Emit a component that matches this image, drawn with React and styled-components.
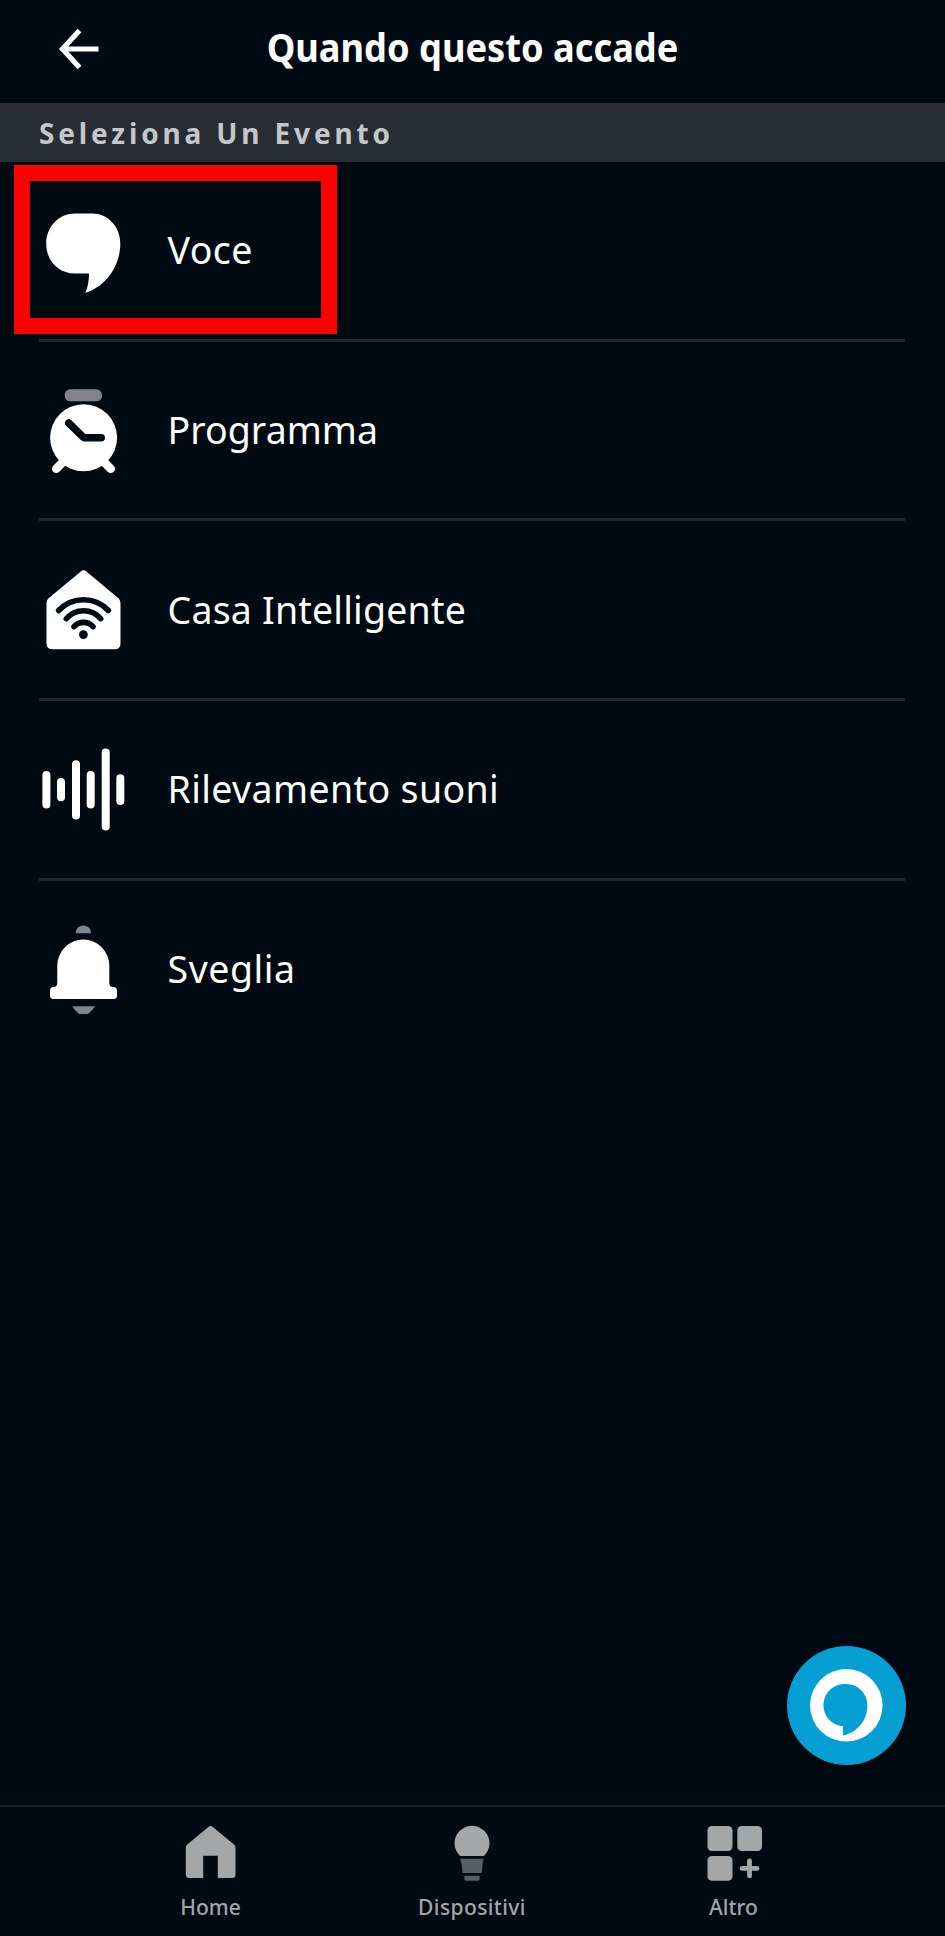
import React from 'react';
import styled, { createGlobalStyle } from 'styled-components';

const GlobalStyle = createGlobalStyle`
    * {
        box-sizing: border-box;
    }

    body {
        margin: 0;
        background: #000a12;
        font-family: "Noto Sans", "Open Sans", sans-serif;
    }
`;

const VoiceIcon = () => (
    <RowIcon viewBox="0 0 92 92">
        <path d="M37 7.5H54C70 7.5 82.3 20.5 82.3 37.5C82.3 60 68 80.5 47.3 86.9C50 80.5 51 74.5 51 67.5H37C20 67.5 8.2 54.5 8.2 37.5C8.2 20.5 21 7.5 37 7.5Z" fill="#fff" />
    </RowIcon>
);

const ClockIcon = () => (
    <RowIcon viewBox="0 0 92 92">
        <rect x="26.7" y="3.3" width="37.3" height="12" rx="5.5" fill="#7f858a" />
        <path d="M26 75L18.3 82.7M65 75L72.7 82.7" stroke="#fff" strokeWidth="8.6" strokeLinecap="round" />
        <circle cx="45.6" cy="51.7" r="33.5" fill="#fff" />
        <path d="M30.7 37L45.7 51.7H63.3" fill="none" stroke="#000a12" strokeWidth="7.4" strokeLinecap="round" strokeLinejoin="round" />
    </RowIcon>
);

const SmartHomeIcon = () => (
    <RowIcon viewBox="0 0 92 92">
        <path d="M42.8 6.4Q45.6 4.2 48.4 6.4L80.4 33.2Q82.5 35 82.5 38V78.3Q82.5 84.3 76.5 84.3H14.5Q8.5 84.3 8.5 78.3V38Q8.5 35 10.6 33.2Z" fill="#fff" />
        <g fill="none" stroke="#000a12" strokeWidth="5.6" strokeLinecap="round">
            <path d="M20.7 45.5A34 34 0 0 1 70.3 45.5" />
            <path d="M28.3 53.7A22.5 22.5 0 0 1 62.7 53.7" />
            <path d="M36 61.6A12.8 12.8 0 0 1 55 61.6" />
        </g>
        <circle cx="45.4" cy="69.6" r="4.4" fill="#000a12" />
    </RowIcon>
);

const SoundIcon = () => (
    <RowIcon viewBox="0 0 92 92">
        <path d="M8.4 29.9V59.5M23 36.9V52.2M38 19.2V70.5M52.7 29.9V59.5M67.7 7.5V81.5M82.3 33.2V55.9" stroke="#fff" strokeWidth="8" strokeLinecap="round" />
    </RowIcon>
);

const BellIcon = () => (
    <RowIcon viewBox="0 0 92 92">
        <path d="M37.7 8.2V6.9A7.7 7.2 0 0 1 53 6.9V8.2Z" fill="#7f858a" />
        <path d="M19.3 40.6A26 26 0 0 1 71.3 40.6V57.7Q71.3 61.9 75 61.9Q79 61.9 79 65.7V70.4Q79 73.9 75.5 73.9H15.6Q12 73.9 12 70.4V65.7Q12 61.9 15.6 61.9Q19.3 61.9 19.3 57.7Z" fill="#fff" />
        <path d="M34.3 81.2H57Q54.5 85.7 50 88.9H41Q36.8 85.7 34.3 81.2Z" fill="#7f858a" />
    </RowIcon>
);

const HomeIcon = () => (
    <TabIcon viewBox="0 0 56 56">
        <path d="M25.4 2Q27.6 0 29.8 2L51 19.6Q52.5 21 52.5 23V49.5Q52.5 53 49 53H34.8V30.7H20.2V53H6.3Q2.8 53 2.8 49.5V23Q2.8 21 4.3 19.6Z" fill="#a4a7a9" />
    </TabIcon>
);

const BulbIcon = () => (
    <TabIcon viewBox="0 0 56 56">
        <path d="M16 31A17.5 17.5 0 1 1 40 31Z" fill="#a4a7a9" />
        <path d="M16 33.7H39.7C38.5 38 38.2 42 37.7 48H18.7C18.2 42 17.5 38 16 33.7Z" fill="#595d65" />
        <path d="M20.3 50.7H35.7L35.2 55.7H20.8Z" fill="#595d65" />
    </TabIcon>
);

const MoreIcon = () => (
    <TabIcon viewBox="0 0 56 56">
        <g fill="#a4a7a9">
            <rect x="1.5" y="1" width="25" height="25" rx="4.5" />
            <rect x="31.3" y="1" width="24.7" height="25" rx="4.5" />
            <rect x="1.5" y="31" width="25" height="24.8" rx="4.5" />
        </g>
        <path d="M36 43.4H51M43.5 35.9V50.9" stroke="#a4a7a9" strokeWidth="4.8" strokeLinecap="round" />
    </TabIcon>
);

const events = [
    { label: 'Voce', Icon: VoiceIcon, spacing: 0.4, selected: true },
    { label: 'Programma', Icon: ClockIcon, spacing: 0.05 },
    { label: 'Casa Intelligente', Icon: SmartHomeIcon, spacing: 0.2 },
    { label: 'Rilevamento suoni', Icon: SoundIcon, spacing: 0.38 },
    { label: 'Sveglia', Icon: BellIcon, spacing: 0.55 },
];

const tabs = [
    { label: 'Home', Icon: HomeIcon, spacing: 0 },
    { label: 'Dispositivi', Icon: BulbIcon, spacing: 0.4 },
    { label: 'Altro', Icon: MoreIcon, spacing: 0 },
];

export default function App() {
    return (
        <Screen>
            <GlobalStyle />
            <Header>
                <BackButton aria-label="Indietro">
                    <svg width="44" height="44" viewBox="0 0 44 44">
                        <path d="M22.5 3.5L5.5 22L22.5 40.5M5 22H41.5" fill="none" stroke="#fff" strokeWidth="5.2" />
                    </svg>
                </BackButton>
                <Title>Quando questo accade</Title>
            </Header>
            <SectionTitle>Seleziona Un Evento</SectionTitle>
            <EventList>
                {events.map(({ label, Icon, spacing, selected }) => (
                    <EventRow key={label}>
                        {selected && <Highlight />}
                        <Icon />
                        <EventLabel $spacing={spacing}>{label}</EventLabel>
                    </EventRow>
                ))}
            </EventList>
            <TabBar>
                <AlexaButton aria-label="Alexa">
                    <svg width="119" height="119" viewBox="0 0 119 119">
                        <circle cx="59.3" cy="59.3" r="36.3" fill="#fff" />
                        <path d="M59.2 38A21.2 21.2 0 0 1 80.4 59.2C80.4 74 71 86 56 89.5V80.3A21.2 21.2 0 0 1 59.2 38Z" fill="#059fd3" />
                    </svg>
                </AlexaButton>
                {tabs.map(({ label, Icon, spacing }) => (
                    <Tab key={label}>
                        <Icon />
                        <TabLabel $spacing={spacing}>{label}</TabLabel>
                    </Tab>
                ))}
            </TabBar>
        </Screen>
    );
}

const Screen = styled.div`
    display: flex;
    flex-direction: column;
    width: 945px;
    height: 1936px;
    background: #000a12;
    color: #fff;
    overflow: hidden;
`;

const Header = styled.header`
    display: grid;
    grid-template-columns: 157px 1fr 157px;
    align-items: center;
    height: 103px;
    padding-bottom: 5px;
`;

const BackButton = styled.button`
    display: flex;
    padding: 0 0 0 57px;
    border: 0;
    background: none;
`;

const Title = styled.h1`
    margin: 0 0 4px;
    font-size: 39.5px;
    font-weight: 700;
    line-height: 54px;
    text-align: center;
    white-space: nowrap;
    transform: scaleX(0.917);
`;

const SectionTitle = styled.h2`
    height: 59px;
    margin: 0;
    padding-left: 39px;
    background: #282c33;
    color: #c4c7c9;
    font-size: 28px;
    font-weight: 700;
    line-height: 61px;
    letter-spacing: 3.85px;
`;

const EventList = styled.ul`
    flex: 1;
    margin: 0;
    padding: 0 40px 0 39px;
    list-style: none;
`;

const EventRow = styled.li`
    position: relative;
    display: flex;
    align-items: center;
    height: 179.7px;
    border-bottom: 3px solid #22272f;

    &:last-child {
        border-bottom-color: transparent;
    }
`;

/* red frame drawn over the selected row */
const Highlight = styled.div`
    position: absolute;
    top: 3px;
    left: -25px;
    width: 323px;
    height: 169px;
    border: 16px solid #fe0000;
`;

const RowIcon = styled.svg`
    flex: none;
    width: 92px;
    height: 92px;
    margin: 3px 0 0 -1px;
`;

const EventLabel = styled.span`
    margin-left: 37.5px;
    font-size: 37.5px;
    line-height: 52px;
    letter-spacing: ${({ $spacing }) => $spacing}px;
    white-space: nowrap;
`;

const TabBar = styled.nav`
    position: relative;
    display: flex;
    justify-content: center;
    height: 131px;
    padding-right: 1px;
    border-top: 2px solid #1a2129;
`;

const Tab = styled.div`
    display: flex;
    flex-direction: column;
    align-items: center;
    width: 261.5px;
    padding-top: 18px;
`;

const TabIcon = styled.svg`
    width: 56px;
    height: 56px;
`;

const TabLabel = styled.span`
    margin-top: 11px;
    color: #a4a7aa;
    font-size: 21px;
    font-weight: 500;
    line-height: 30px;
    letter-spacing: ${({ $spacing }) => $spacing}px;
`;

const AlexaButton = styled.button`
    position: absolute;
    top: -161px;
    right: 39px;
    display: flex;
    width: 119px;
    height: 119px;
    padding: 0;
    border: 0;
    border-radius: 50%;
    background: #059fd3;
    box-shadow: 0 8px 14px rgba(0, 0, 0, 0.4);
`;
